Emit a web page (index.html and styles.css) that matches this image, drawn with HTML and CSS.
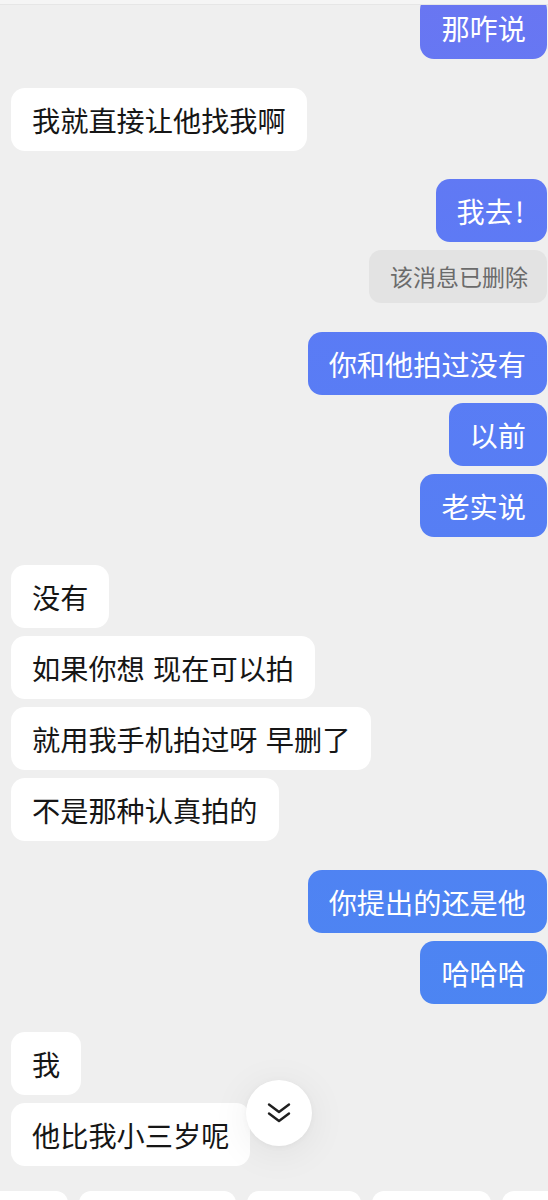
FILE: index.html
```html
<!DOCTYPE html>
<html lang="zh-CN">
<head>
  <meta charset="UTF-8" />
  <meta name="viewport" content="width=device-width, initial-scale=1.0"/>
  <title>聊天</title>
  <link rel="stylesheet" href="styles.css">
</head>
<body>

  <div class="topbar"></div>

  <div class="chat">
    <div class="msg me first">那咋说</div>

    <div class="msg them group">我就直接让他找我啊</div>

    <div class="msg me group">我去<span class="bang">!</span></div>
    <div class="msg deleted">该消息已删除</div>

    <div class="msg me group">你和他拍过没有</div>
    <div class="msg me">以前</div>
    <div class="msg me">老实说</div>

    <div class="msg them group">没有</div>
    <div class="msg them">如果你想 现在可以拍</div>
    <div class="msg them">就用我手机拍过呀 早删了</div>
    <div class="msg them">不是那种认真拍的</div>

    <div class="msg me group">你提出的还是他</div>
    <div class="msg me">哈哈哈</div>

    <div class="msg them group">我</div>
    <div class="msg them">他比我小三岁呢</div>
  </div>

  <!-- quick replies, cut off by the bottom of the screen -->
  <div class="chips">
    <div class="chips-track">
      <div class="chip chip-a"></div>
      <div class="chip chip-b"></div>
      <div class="chip chip-c"></div>
      <div class="chip chip-d"></div>
      <div class="chip chip-e"></div>
    </div>
  </div>

  <button class="to-bottom" aria-label="回到底部">
    <svg width="26" height="26" viewBox="0 0 26 26" fill="none" stroke="#1f1f1f" stroke-width="2.4" stroke-linecap="round" stroke-linejoin="round">
      <path d="M3 4.5l10 7.5 10-7.5"/>
      <path d="M3 13.5l10 7.5 10-7.5"/>
    </svg>
  </button>

</body>
</html>
```

FILE: styles.css
```css
* {
  box-sizing: border-box;
  font-family: "Noto Sans CJK SC", "Noto Sans", sans-serif;
}
html, body {
  margin: 0;
  padding: 0;
}
body {
  width: 548px;
  height: 1200px;
  overflow: hidden;
  background: #efefef;
  position: relative;
}
.topbar {
  position: relative;
  z-index: 2;
  height: 5px;
  background: #f5f5f5;
  border-bottom: 1px solid #e6e6e6;
}
.chat {
  display: flex;
  flex-direction: column;
  gap: 8px;
  padding: 0 1px 0 11px;
  margin-top: -9px;
}
.msg {
  height: 63px;
  line-height: 63px;
  padding: 0 21px;
  font-size: 28.2px;
  word-spacing: 2px;
  border-radius: 14px;
  white-space: nowrap;
}
.msg.group {
  margin-top: 20.5px;
}
.me {
  align-self: flex-end;
  color: #fff;
  /* gradient follows the screen, not the bubble */
  background: linear-gradient(to bottom, #6976f2 0%, #5b7bf5 25%, #4c85f2 85%, #4a88ef 100%);
  background-attachment: fixed;
}
.bang {
  margin-left: 2px;
  margin-right: 2px;
}
.them {
  align-self: flex-start;
  background: #fff;
  color: #161616;
}
.deleted {
  align-self: flex-end;
  height: 53px;
  line-height: 53px;
  padding: 0 19px 0 21px;
  font-size: 23px;
  color: #6b6b6b;
  background: #e3e3e3;
  border-radius: 12px;
}
.chips {
  margin-top: 24.5px;
  overflow: hidden;
}
.chips-track {
  display: flex;
  gap: 11px;
  margin-left: -40px;
}
.chip {
  flex: none;
  height: 40px;
  background: #fff;
  border-radius: 12px 12px 0 0;
}
.chip-a { width: 108px; }
.chip-b { width: 157px; }
.chip-c { width: 114px; }
.chip-d { width: 119px; }
.chip-e { width: 100px; }
.to-bottom {
  position: absolute;
  left: 246px;
  top: 1080px;
  width: 66px;
  height: 66px;
  border: none;
  border-radius: 50%;
  background: #fff;
  box-shadow: 0 6px 40px rgba(0,0,0,0.07), 0 1px 6px rgba(0,0,0,0.04);
  display: flex;
  align-items: center;
  justify-content: center;
  padding: 0;
  cursor: pointer;
}
```
